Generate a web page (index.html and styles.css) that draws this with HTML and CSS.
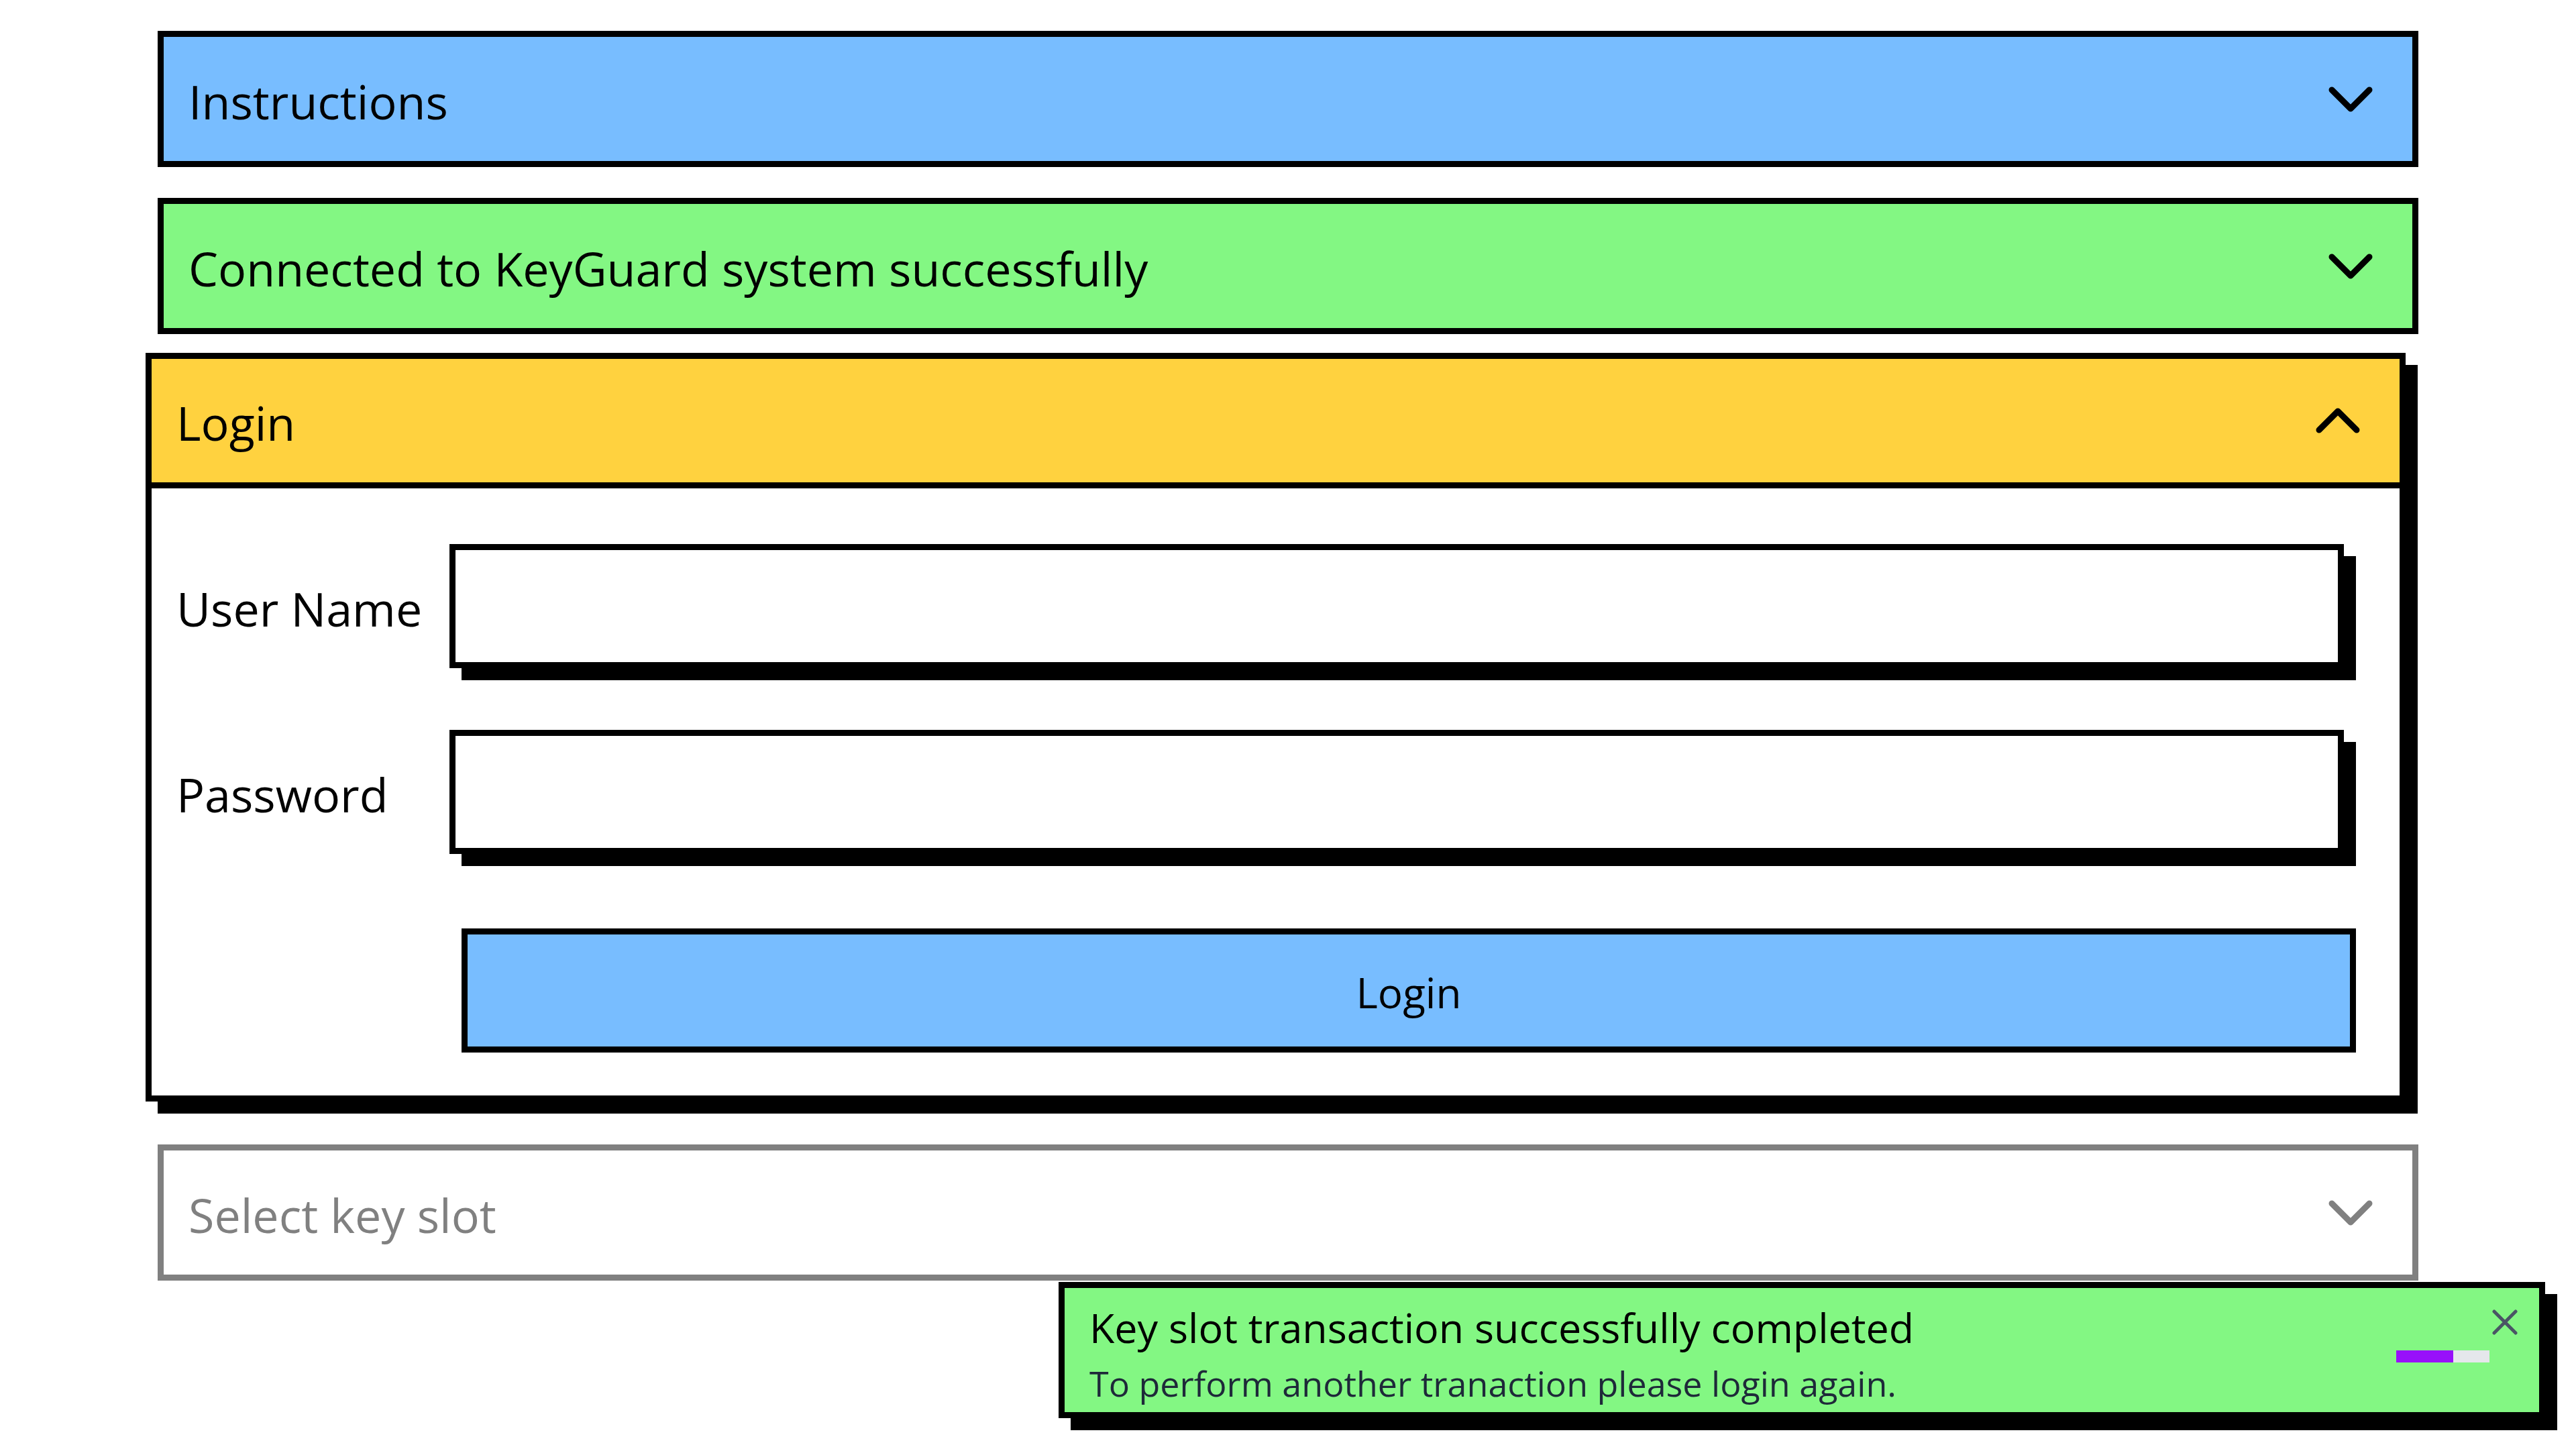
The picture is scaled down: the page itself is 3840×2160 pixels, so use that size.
FILE: index.html
```html
<!DOCTYPE html>
<html lang="en">
<head>
  <meta charset="utf-8">
  <meta name="viewport" content="width=device-width, initial-scale=1">
  <title>KeyGuard</title>
  <link rel="stylesheet" href="styles.css">
</head>
<body>
  <main class="page">
    <section class="card">
      <button class="card-header blue" type="button" aria-expanded="false">
        <span class="card-title">Instructions</span>
        <svg class="chevron" viewBox="0 0 92 92" aria-hidden="true"><path d="M18 32 46 60 74 32"/></svg>
      </button>
    </section>

    <section class="card">
      <button class="card-header green" type="button" aria-expanded="false">
        <span class="card-title">Connected to KeyGuard system successfully</span>
        <svg class="chevron" viewBox="0 0 92 92" aria-hidden="true"><path d="M18 32 46 60 74 32"/></svg>
      </button>
    </section>

    <section class="card raised">
      <button class="card-header yellow" type="button" aria-expanded="true">
        <span class="card-title">Login</span>
        <svg class="chevron" viewBox="0 0 92 92" aria-hidden="true"><path d="M18 60 46 32 74 60"/></svg>
      </button>
      <form class="login-form">
        <label class="label" for="username">User Name</label>
        <input class="field" id="username" type="text">
        <label class="label" for="password">Password</label>
        <input class="field" id="password" type="password">
        <button class="submit blue" type="button">Login</button>
      </form>
    </section>

    <section class="card disabled">
      <button class="card-header" type="button" aria-expanded="false" disabled>
        <span class="card-title">Select key slot</span>
        <svg class="chevron" viewBox="0 0 92 92" aria-hidden="true"><path d="M18 32 46 60 74 32"/></svg>
      </button>
    </section>
  </main>

  <aside class="toast green" role="status">
    <div class="toast-text">
      <p class="toast-title">Key slot transaction successfully completed</p>
      <p class="toast-detail">To perform another tranaction please login again.</p>
    </div>
    <div class="progress"><div class="progress-value" style="width: 61%"></div></div>
    <button class="close" type="button" aria-label="Close">
      <svg class="close-icon" viewBox="0 0 38 38" aria-hidden="true"><path d="M3 3 35 35M35 3 3 35"/></svg>
    </button>
  </aside>
</body>
</html>
```
FILE: styles.css
```css
* {
  box-sizing: border-box;
}

body {
  margin: 0;
  background: #fff;
  color: #000;
  font-family: "Segoe UI", "Open Sans", "Noto Sans", sans-serif;
  font-size: 70px;
  line-height: 96px;
}

button,
input {
  border: 0;
  border-radius: 0;
  margin: 0;
  color: inherit;
  font: inherit;
}

.blue { background: #78bdff; }
.green { background: #83f783; }
.yellow { background: #ffd23f; }

.page {
  display: flex;
  flex-direction: column;
  gap: 46px;
  padding: 46px 235px;
}

.card {
  border: 9px solid #000;
  background: #fff;
}

.raised {
  margin: -18px 19px 18px -18px;
  box-shadow: 18px 18px 0 #000;
}

.disabled {
  border-color: #808080;
  color: #808080;
}

.card-header {
  display: flex;
  align-items: center;
  justify-content: space-between;
  width: 100%;
  min-height: 185px;
  padding: 0 46px 0 37px;
  text-align: left;
}

.disabled .card-header {
  background: #fff;
}

.raised .card-header {
  min-height: 193px;
  border-bottom: 9px solid #000;
}

.card-title,
.label {
  padding-top: 6px;
}

.chevron {
  flex: none;
  width: 92px;
  height: 92px;
  fill: none;
  stroke: currentColor;
  stroke-width: 9;
  stroke-linecap: round;
  stroke-linejoin: round;
}

.login-form {
  display: grid;
  grid-template-columns: 407px 1fr;
  row-gap: 92px;
  align-items: center;
  padding: 83px 83px 64px 37px;
}

.field {
  width: 100%;
  height: 185px;
  padding: 0 37px;
  border: 9px solid #000;
  background: #fff;
  box-shadow: 18px 18px 0 #000;
}

.submit {
  grid-column: 2;
  height: 185px;
  margin: 19px -18px 0 18px;
  padding-top: 6px;
  border: 9px solid #000;
  font-size: 62px;
}

/* Notification pinned over the page's lower right corner */
.toast {
  position: fixed;
  right: 46px;
  bottom: 46px;
  display: flex;
  align-items: center;
  width: 2216px;
  max-width: calc(100% - 92px);
  min-height: 203px;
  padding: 0 32px 0 37px;
  border: 9px solid #000;
  box-shadow: 18px 18px 0 #000;
}

.toast-text {
  flex: 1;
  padding-top: 6px;
}

.toast-title,
.toast-detail {
  margin: 0;
}

.toast-title {
  font-size: 61px;
  line-height: 92px;
}

.toast-detail {
  color: #1e2939;
  font-size: 52px;
  line-height: 74px;
}

.progress {
  width: 139px;
  height: 18px;
  margin-top: 19px;
  background: #e5e7eb;
}

.progress-value {
  height: 100%;
  background: #9810fa;
}

.close {
  align-self: flex-start;
  display: flex;
  margin: 32px 0 0 4px;
  padding: 0;
  background: none;
  color: #4a5565;
}

.close-icon {
  width: 38px;
  height: 38px;
  fill: none;
  stroke: currentColor;
  stroke-width: 5;
  stroke-linecap: round;
}
```
